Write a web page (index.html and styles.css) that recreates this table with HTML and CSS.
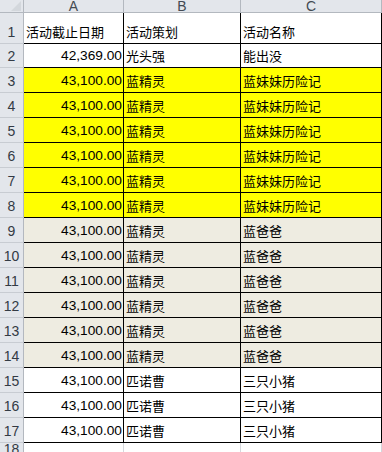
FILE: index.html
```html
<!DOCTYPE html>
<html lang="zh">
<head>
<meta charset="utf-8">
<title>Sheet</title>
<link rel="stylesheet" href="styles.css">
</head>
<body>
<div class="sheet">
  <div class="row hdr">
    <div class="rn corner"><span class="tri"></span></div>
    <div class="hc ca">A</div>
    <div class="hc cb">B</div>
    <div class="hc cc">C</div>
  </div>
  <div class="row r1">
    <div class="rn">1</div>
    <div class="cell ca">活动截止日期</div>
    <div class="cell cb">活动策划</div>
    <div class="cell cc">活动名称</div>
  </div>
  <div class="row r2">
    <div class="rn">2</div>
    <div class="cell ca num">42,369.00</div>
    <div class="cell cb">光头强</div>
    <div class="cell cc">能出没</div>
  </div>
  <div class="row yl"><div class="rn">3</div><div class="cell ca num">43,100.00</div><div class="cell cb">蓝精灵</div><div class="cell cc">蓝妹妹历险记</div></div>
  <div class="row yl"><div class="rn">4</div><div class="cell ca num">43,100.00</div><div class="cell cb">蓝精灵</div><div class="cell cc">蓝妹妹历险记</div></div>
  <div class="row yl"><div class="rn">5</div><div class="cell ca num">43,100.00</div><div class="cell cb">蓝精灵</div><div class="cell cc">蓝妹妹历险记</div></div>
  <div class="row yl"><div class="rn">6</div><div class="cell ca num">43,100.00</div><div class="cell cb">蓝精灵</div><div class="cell cc">蓝妹妹历险记</div></div>
  <div class="row yl"><div class="rn">7</div><div class="cell ca num">43,100.00</div><div class="cell cb">蓝精灵</div><div class="cell cc">蓝妹妹历险记</div></div>
  <div class="row yl"><div class="rn">8</div><div class="cell ca num">43,100.00</div><div class="cell cb">蓝精灵</div><div class="cell cc">蓝妹妹历险记</div></div>
  <div class="row bg"><div class="rn">9</div><div class="cell ca num">43,100.00</div><div class="cell cb">蓝精灵</div><div class="cell cc">蓝爸爸</div></div>
  <div class="row bg"><div class="rn">10</div><div class="cell ca num">43,100.00</div><div class="cell cb">蓝精灵</div><div class="cell cc">蓝爸爸</div></div>
  <div class="row bg"><div class="rn">11</div><div class="cell ca num">43,100.00</div><div class="cell cb">蓝精灵</div><div class="cell cc">蓝爸爸</div></div>
  <div class="row bg"><div class="rn">12</div><div class="cell ca num">43,100.00</div><div class="cell cb">蓝精灵</div><div class="cell cc">蓝爸爸</div></div>
  <div class="row bg"><div class="rn">13</div><div class="cell ca num">43,100.00</div><div class="cell cb">蓝精灵</div><div class="cell cc">蓝爸爸</div></div>
  <div class="row bg"><div class="rn">14</div><div class="cell ca num">43,100.00</div><div class="cell cb">蓝精灵</div><div class="cell cc">蓝爸爸</div></div>
  <div class="row"><div class="rn">15</div><div class="cell ca num">43,100.00</div><div class="cell cb">匹诺曹</div><div class="cell cc">三只小猪</div></div>
  <div class="row"><div class="rn">16</div><div class="cell ca num">43,100.00</div><div class="cell cb">匹诺曹</div><div class="cell cc">三只小猪</div></div>
  <div class="row"><div class="rn">17</div><div class="cell ca num">43,100.00</div><div class="cell cb">匹诺曹</div><div class="cell cc">三只小猪</div></div>
  <div class="row r18">
    <div class="rn">18</div>
    <div class="empty ca"></div>
    <div class="empty cb"></div>
    <div class="empty cc"></div>
  </div>
</div>
</body>
</html>
```

FILE: styles.css
```css
html, body {
  margin: 0;
  padding: 0;
  background: #ffffff;
}

.sheet {
  width: 382px;
  height: 452px;
  overflow: hidden;
  font-family: "Liberation Sans", "Noto Sans CJK SC", sans-serif;
  color: #000;
}

.row {
  display: flex;
  height: 25px;
}

.hdr { height: 13px; }
.r1 { height: 31px; }
.r2 { height: 24px; }
.r18 { height: 25px; }

.ca { width: 100px; flex: none; }
.cb { width: 117px; flex: none; }
.cc { flex: 1; min-width: 0; }

.rn {
  width: 24px;
  flex: none;
  box-sizing: border-box;
  background: #e3e6eb;
  border-right: 1px solid #b3b8bf;
  border-bottom: 1px solid #c8ccd2;
  display: flex;
  align-items: flex-end;
  justify-content: center;
  padding-bottom: 4px;
  font-size: 14px;
  line-height: 1;
  color: #333a44;
}

.r18 .rn {
  align-items: flex-start;
  padding: 0;
  line-height: 12px;
}

.corner {
  position: relative;
  border-bottom-color: #b3b8bf;
  padding: 0;
}

.tri {
  position: absolute;
  right: 2px;
  bottom: 1px;
  width: 0;
  height: 0;
  border-left: 10px solid transparent;
  border-bottom: 10px solid #d3d7dc;
}

.hc {
  box-sizing: border-box;
  background: #e3e6eb;
  border-right: 1px solid #b3b8bf;
  border-bottom: 1px solid #b3b8bf;
  display: flex;
  align-items: flex-end;
  justify-content: center;
  font-size: 14px;
  line-height: 12px;
  color: #444a52;
}

.cell {
  box-sizing: border-box;
  border-right: 1px solid #000;
  border-bottom: 1px solid #000;
  display: flex;
  align-items: flex-end;
  padding: 0 2px 4px 2px;
  font-size: 13px;
  line-height: 1;
  white-space: nowrap;
  overflow: hidden;
}

.num {
  justify-content: flex-end;
  font-size: 13.7px;
  padding-right: 1px;
}

.yl .cell { background: #ffff00; }
.bg .cell { background: #eeece1; }

.empty {
  box-sizing: border-box;
  border-right: 1px solid #d4d7dc;
}
```
